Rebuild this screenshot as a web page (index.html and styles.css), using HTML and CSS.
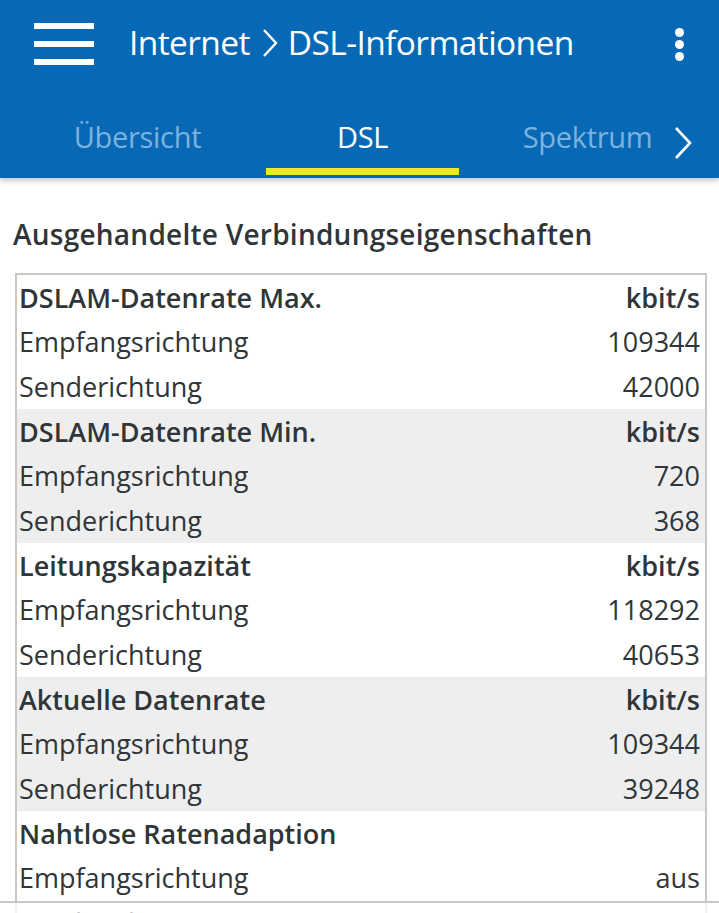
FILE: index.html
```html
<!DOCTYPE html>
<html lang="de">
<head>
<meta charset="utf-8">
<title>DSL-Informationen</title>
<link rel="stylesheet" href="styles.css">
</head>
<body>
<header class="appbar">
  <div class="toolbar">
    <div class="hamburger"><span></span><span></span><span></span></div>
    <h1 class="title"><span>Internet</span><svg class="crumb" width="18" height="30" viewBox="0 0 18 30"><path d="M3 2 L15 15 L3 28" fill="none" stroke="#fff" stroke-width="2.4"/></svg><span>DSL-Informationen</span></h1>
    <div class="kebab"><span></span><span></span><span></span></div>
  </div>
  <nav class="tabs">
    <div class="tab">Übersicht</div>
    <div class="tab active">DSL</div>
    <div class="tab">Spektrum</div>
    <div class="tab-next"><svg width="20" height="34" viewBox="0 0 20 34"><path d="M3 2 L17 17 L3 32" fill="none" stroke="#fff" stroke-width="2.6"/></svg></div>
  </nav>
</header>
<main class="content">
  <h2 class="heading">Ausgehandelte Verbindungseigenschaften</h2>
  <div class="table">
    <div class="group">
      <div class="row head"><span>DSLAM-Datenrate Max.</span><span>kbit/s</span></div>
      <div class="row"><span>Empfangsrichtung</span><span>109344</span></div>
      <div class="row"><span>Senderichtung</span><span>42000</span></div>
    </div>
    <div class="group alt">
      <div class="row head"><span>DSLAM-Datenrate Min.</span><span>kbit/s</span></div>
      <div class="row"><span>Empfangsrichtung</span><span>720</span></div>
      <div class="row"><span>Senderichtung</span><span>368</span></div>
    </div>
    <div class="group">
      <div class="row head"><span>Leitungskapazität</span><span>kbit/s</span></div>
      <div class="row"><span>Empfangsrichtung</span><span>118292</span></div>
      <div class="row"><span>Senderichtung</span><span>40653</span></div>
    </div>
    <div class="group alt">
      <div class="row head"><span>Aktuelle Datenrate</span><span>kbit/s</span></div>
      <div class="row"><span>Empfangsrichtung</span><span>109344</span></div>
      <div class="row"><span>Senderichtung</span><span>39248</span></div>
    </div>
    <div class="group">
      <div class="row head"><span>Nahtlose Ratenadaption</span><span></span></div>
      <div class="row"><span>Empfangsrichtung</span><span>aus</span></div>
      <div class="row"><span>Senderichtung</span><span>aus</span></div>
    </div>
  </div>
</main>
<div class="bottom-fade"></div>
</body>
</html>
```
FILE: styles.css
```css
* { box-sizing: border-box; }
html, body { margin: 0; padding: 0; }
body {
  width: 719px;
  height: 913px;
  overflow: hidden;
  background: #fff;
  font-family: "Open Sans", Lato, sans-serif;
  color: #2f3538;
}
.appbar {
  height: 178px;
  background: #0769b5;
  box-shadow: 0 2px 6px rgba(0,0,0,0.28);
  position: relative;
  z-index: 2;
}
.toolbar {
  height: 88px;
  display: flex;
  align-items: center;
  padding-left: 34px;
}
.hamburger {
  width: 60px;
  height: 42px;
  display: flex;
  flex-direction: column;
  justify-content: space-between;
}
.hamburger span {
  display: block;
  height: 6px;
  background: #fff;
}
.title {
  margin: 0 0 4px 35px;
  display: flex;
  align-items: center;
  font-size: 33.5px;
  font-weight: 400;
  color: #fff;
  letter-spacing: -0.6px;
}
.crumb { margin: 2px 9px 0 11px; }
.kebab {
  margin-left: auto;
  margin-right: 35px;
  display: flex;
  flex-direction: column;
  gap: 3px;
}
.kebab span {
  width: 9px;
  height: 9px;
  border-radius: 50%;
  background: #fff;
}
.tabs {
  height: 90px;
  display: flex;
  padding-left: 25px;
  position: relative;
  overflow: hidden;
}
.tab {
  flex: 0 0 225px;
  display: flex;
  justify-content: center;
  align-items: center;
  padding-top: 6px;
  font-size: 29px;
  letter-spacing: -0.3px;
  color: #7eb2de;
  position: relative;
  white-space: nowrap;
}
.tab.active { color: #fff; }
.tab.active::after {
  content: "";
  position: absolute;
  left: 16px;
  right: 16px;
  bottom: 3px;
  height: 7px;
  background: #f2ea1e;
}
.tab-next {
  position: absolute;
  right: 0;
  top: 0;
  width: 47px;
  height: 86px;
  background: #0769b5;
  padding-top: 38px;
  padding-left: 1px;
}
.tab-next svg { display: block; }
.content {
  padding: 39px 12px 0 13px;
}
.heading {
  margin: 0 0 22px 0;
  font-size: 28px;
  font-weight: 600;
  color: #2f3538;
  line-height: 34px;
  letter-spacing: 0.25px;
}
.table {
  margin-left: 2px;
  border: 2px solid #c9c9c1;
  border-bottom: none;
}
.group { background: #fff; }
.group.alt { background: #eeeeee; }
.row {
  height: 44.67px;
  display: flex;
  justify-content: space-between;
  align-items: center;
  padding: 0 5px 0 2px;
  font-size: 27px;
}
.row.head { font-weight: 600; }
.bottom-fade {
  position: fixed;
  left: 0;
  right: 0;
  bottom: 0;
  height: 12px;
  background: rgba(255,255,255,0.72);
  border-top: 2px solid #c8c8c8;
}
```
